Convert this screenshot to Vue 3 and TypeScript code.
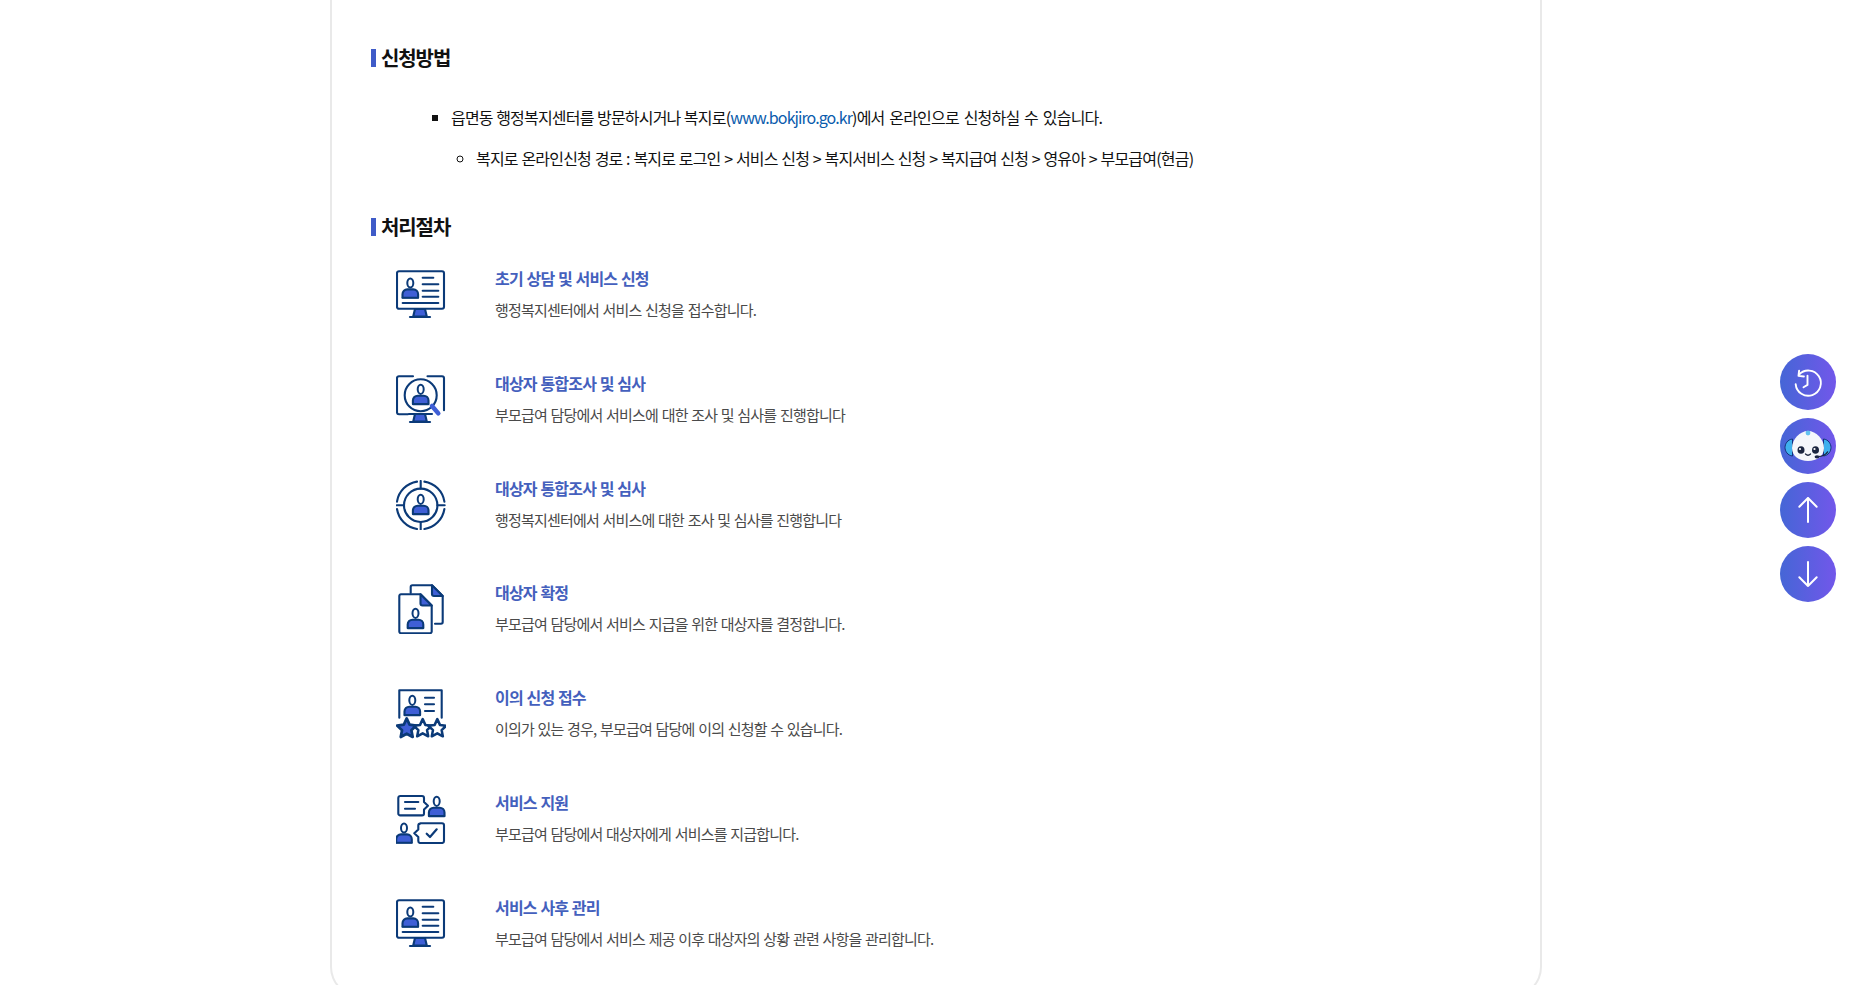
<script setup lang="ts">
interface Step {
  icon: string
  title: string
  desc: string
}

const steps: Step[] = [
  { icon: 'monitor', title: '초기 상담 및 서비스 신청', desc: '행정복지센터에서 서비스 신청을 접수합니다.' },
  { icon: 'search', title: '대상자 통합조사 및 심사', desc: '부모급여 담당에서 서비스에 대한 조사 및 심사를 진행합니다' },
  { icon: 'target', title: '대상자 통합조사 및 심사', desc: '행정복지센터에서 서비스에 대한 조사 및 심사를 진행합니다' },
  { icon: 'docs', title: '대상자 확정', desc: '부모급여 담당에서 서비스 지급을 위한 대상자를 결정합니다.' },
  { icon: 'stars', title: '이의 신청 접수', desc: '이의가 있는 경우, 부모급여 담당에 이의 신청할 수 있습니다.' },
  { icon: 'chat', title: '서비스 지원', desc: '부모급여 담당에서 대상자에게 서비스를 지급합니다.' },
  { icon: 'monitor', title: '서비스 사후 관리', desc: '부모급여 담당에서 서비스 제공 이후 대상자의 상황 관련 사항을 관리합니다.' },
]
</script>

<template>
  <div class="page">
    <svg class="defs" width="0" height="0" aria-hidden="true">
      <defs>
        <g id="person">
          <path d="M-7.800 14.800v-3.600a4.800 4.800 0 0 1 4.800-4.800h6a4.800 4.800 0 0 1 4.800 4.800v3.600z" fill="#3f5fd6" />
          <path d="M-8 14.800H8" stroke="#0b3a78" stroke-width="1.300" />
          <ellipse cx="0" cy="0" rx="3" ry="4.600" fill="#fff" stroke="#0b3a78" stroke-width="2" />
        </g>
        <g id="stand">
          <path d="M19 39h10l1.800 7.600H17.200z" fill="#3f5fd6" />
          <path d="M14 47h20" stroke="#0b3a78" stroke-width="2.200" stroke-linecap="round" />
        </g>
        <path id="star" d="M0-7.400 2.200-2.600 7.400-1.900 3.600 1.700 4.600 6.900 0 4.400-4.600 6.900-3.600 1.700-7.400-1.900-2.200-2.600z" stroke-linejoin="round" />
      </defs>
    </svg>

    <main class="card">
      <h2 class="heading">신청방법</h2>
      <ul class="methods">
        <li>
          읍면동 행정복지센터를 방문하시거나 복지로(<a class="link" href="#">www.bokjiro.go.kr</a>)<span class="tail">에서 온라인으로 신청하실 수 있습니다.</span>
          <ul class="sub">
            <li>복지로 온라인신청 경로 : 복지로 로그인 &gt; 서비스 신청 &gt; 복지서비스 신청 &gt; 복지급여 신청 &gt; 영유아 &gt; 부모급여(현금)</li>
          </ul>
        </li>
      </ul>

      <h2 class="heading second">처리절차</h2>
      <ol class="steps">
        <li v-for="(step, i) in steps" :key="i" class="step">
          <svg class="icon" width="50" height="50" viewBox="0 0 50 50" fill="none" stroke="#0b3a78" stroke-width="2.100" stroke-linecap="round" stroke-linejoin="round">
            <template v-if="step.icon === 'monitor'">
              <rect x="1" y="1.200" width="47" height="37.600" rx="2" />
              <use href="#person" x="14.300" y="13" />
              <path d="M26.700 7.700h10.600M26.700 14.300h15.600M26.700 20.700h15.600M26.700 26.700h15.600M6.700 33h35.600" />
              <use href="#stand" />
            </template>
            <template v-else-if="step.icon === 'search'">
              <path d="M17 1.200H3a2 2 0 0 0-2 2v34a2 2 0 0 0 2 2h9M31.500 1.200H46a2 2 0 0 1 2 2v32" />
              <circle cx="24.700" cy="20.300" r="16" />
              <use href="#person" x="24.700" y="14.300" />
              <path d="M36 31 42.300 38.400" stroke="#3f5fd6" stroke-width="4.500" />
              <path d="M13 39h23" />
              <use href="#stand" />
            </template>
            <template v-else-if="step.icon === 'target'">
              <circle cx="24.700" cy="25.300" r="16.700" />
              <path d="M21 1.600A24 24 0 0 0 1 21.600M28.400 1.600A24 24 0 0 1 48.400 21.600M1 29A24 24 0 0 0 21 49M48.400 29A24 24 0 0 1 28.400 49" />
              <path d="M24.700 1v7.600M24.700 42v7.600M.7 25.300h7.300M41.400 25.300h7.300" />
              <use href="#person" x="24.700" y="19.300" />
            </template>
            <template v-else-if="step.icon === 'docs'">
              <path d="M14.700 9V3a1.700 1.700 0 0 1 1.700-1.700H36L46.700 12v26a1.700 1.700 0 0 1-1.700 1.700h-6" />
              <path d="M36 1.300 46.700 12H38a2 2 0 0 1-2-2z" fill="#3f5fd6" />
              <path d="M5 10.300h19.500l11.200 11.200v26a1.700 1.700 0 0 1-1.700 1.700H5a1.700 1.700 0 0 1-1.700-1.700V12A1.700 1.700 0 0 1 5 10.300z" fill="#fff" />
              <path d="M24.500 10.300 35.700 21.500H26.500a2 2 0 0 1-2-2z" fill="#3f5fd6" />
              <use href="#person" x="19.500" y="29.300" />
            </template>
            <template v-else-if="step.icon === 'stars'">
              <path d="M3.300 28.700V1.300h42.400v27.400" />
              <use href="#person" x="16.300" y="11.300" />
              <path d="M29 8.700h9M29 15.300h9M29 22h9" />
              <use href="#star" transform="translate(10.700 39) scale(1.300)" fill="#3f5fd6" />
              <use href="#star" transform="translate(26.700 39) scale(1.200)" fill="#fff" />
              <use href="#star" transform="translate(41.300 39) scale(1.200)" fill="#fff" />
            </template>
            <template v-else>
              <path d="M4.300 2H26a2 2 0 0 1 2 2v4l4 3.700-4 3.700v4a2 2 0 0 1-2 2H4.300a2 2 0 0 1-2-2V4a2 2 0 0 1 2-2z" />
              <path d="M9 8h13.300M9 14.700h10" />
              <use href="#person" x="40.700" y="7.300" />
              <use href="#person" x="8" y="34" />
              <path d="M24.300 29.300H46a2 2 0 0 1 2 2V47a2 2 0 0 1-2 2H24.300a2 2 0 0 1-2-2v-4l-4-3.700 4-3.700v-4a2 2 0 0 1 2-2z" />
              <path d="M30.700 39.700 34 43l6.700-7.700" stroke-width="2.200" />
            </template>
          </svg>
          <div class="copy">
            <strong class="title">{{ step.title }}</strong>
            <p class="desc">{{ step.desc }}</p>
          </div>
        </li>
      </ol>
    </main>

    <nav class="float">
      <button class="fab" type="button" aria-label="최근 본 서비스">
        <svg width="56" height="56" viewBox="0 0 56 56" fill="none" stroke="#fff" stroke-width="1.900" stroke-linecap="round" stroke-linejoin="round">
          <path d="M19.100 20.500A12.600 12.600 0 1 1 15.700 30.300" />
          <path d="M19.100 16.700 18.500 21.900 23.900 22.500" />
          <path d="M27.500 21.800V30.900L23.500 33.300" />
        </svg>
      </button>
      <button class="fab" type="button" aria-label="챗봇">
        <svg width="56" height="56" viewBox="0 0 56 56">
          <path d="M12.500 21c-5 .5-7.500 5-7.500 8.500s2.500 8 7.500 8.500zM43.500 21c5 .5 7.500 5 7.500 8.500s-2.500 8-7.500 8.500z" fill="#3fb0ee" stroke="#15307a" stroke-width="1" />
          <path d="M28 13c8 0 16 8 16 17C44 38 37 43 28 43S12 38 12 30C12 21 20 13 28 13z" fill="#f5f7fb" />
          <circle cx="28" cy="15" r="2.400" fill="#63c1ef" />
          <ellipse cx="21" cy="32" rx="3.500" ry="3.800" fill="#1c2640" />
          <ellipse cx="35.500" cy="32" rx="3.500" ry="3.800" fill="#1c2640" />
          <circle cx="20" cy="31" r="1.100" fill="#fff" />
          <circle cx="34.500" cy="31" r="1.100" fill="#fff" />
          <path d="M25.500 36c1.500 1.500 3.500 1.500 5 0" fill="none" stroke="#1c2640" stroke-width="1.300" stroke-linecap="round" />
          <path d="M47.500 34c-2 3.500-6 4.500-10 4.700" fill="none" stroke="#1c2640" stroke-width="1.500" stroke-linecap="round" />
          <ellipse cx="37" cy="38.800" rx="2.400" ry="1.600" fill="#1c2640" />
        </svg>
      </button>
      <button class="fab" type="button" aria-label="위로">
        <svg width="56" height="56" viewBox="0 0 56 56" fill="none" stroke="#fff" stroke-width="2" stroke-linecap="round" stroke-linejoin="round">
          <path d="M28 16v24M19.300 24.800l8.700-8.800 8.700 8.800" />
        </svg>
      </button>
      <button class="fab" type="button" aria-label="아래로">
        <svg width="56" height="56" viewBox="0 0 56 56" fill="none" stroke="#fff" stroke-width="2" stroke-linecap="round" stroke-linejoin="round">
          <path d="M28 16v24M19.300 31.200l8.700 8.800 8.700-8.800" />
        </svg>
      </button>
    </nav>
  </div>
</template>

<style>
html,
body {
  margin: 0;
  height: 985px;
  overflow: hidden;
  background: #fff;
}
</style>

<style scoped>
.page {
  height: 985px;
  overflow: hidden;
  font-family: "Noto Sans CJK KR", "Noto Sans", sans-serif;
  color: #111;
  letter-spacing: -0.05em;
  word-spacing: 0.8px;
}
.defs {
  position: absolute;
}
.card {
  box-sizing: border-box;
  width: 1212px;
  height: 997px;
  margin-left: 330px;
  padding: 43px 39px 0;
  border: 2px solid #e9e9e9;
  border-top: 0;
  border-radius: 0 0 30px 30px;
}
.heading {
  margin: 0;
  padding-left: 10px;
  font-size: 20px;
  line-height: 30px;
  font-weight: 700;
  letter-spacing: -1.100px;
  position: relative;
}
.heading::before {
  content: "";
  position: absolute;
  left: 0;
  top: 6px;
  width: 5px;
  height: 18px;
  background: #3f5bc8;
}
.second {
  margin-top: 41px;
}
.methods {
  list-style: square;
  margin: 31px 0 0;
  padding: 0 0 0 80px;
  font-size: 16px;
  line-height: 26px;
  word-spacing: 0.600px;
}
.tail {
  word-spacing: 2px;
}
.sub {
  list-style: circle;
  margin: 15px 0 0;
  padding: 0 0 0 25px;
  word-spacing: 0.850px;
}
.link {
  color: #0b5cad;
  text-decoration: none;
  letter-spacing: -0.900px;
}
.steps {
  list-style: none;
  margin: 24px 0 0;
  padding: 0;
}
.step {
  display: flex;
  align-items: flex-start;
  height: 104.800px;
  padding-left: 25px;
}
.icon {
  flex: none;
  margin-top: 4px;
}
.copy {
  margin-left: 49px;
}
.title {
  display: block;
  font-size: 16px;
  line-height: 24px;
  font-weight: 700;
  color: #4460bd;
}
.desc {
  margin: 8px 0 0;
  font-size: 15px;
  line-height: 24px;
  color: #4a4a4a;
  word-spacing: 1px;
}
.float {
  position: fixed;
  left: 1780px;
  top: 354px;
  display: flex;
  flex-direction: column;
  gap: 8px;
}
.fab {
  width: 56px;
  height: 56px;
  padding: 0;
  border: 0;
  border-radius: 50%;
  background: linear-gradient(90deg, #4566d6, #7257ea);
}
.fab svg {
  display: block;
}
</style>
